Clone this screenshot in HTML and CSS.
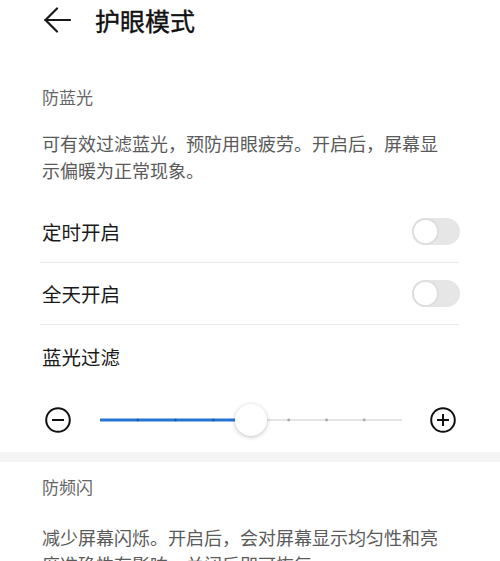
FILE: index.html
```html
<!DOCTYPE html>
<html lang="zh-CN">
<head>
<meta charset="utf-8">
<title>护眼模式</title>
<link rel="stylesheet" href="styles.css">
</head>
<body>
<div class="header">
  <svg class="back" width="28" height="26" viewBox="0 0 28 26"><path d="M27 13H2M14 1.5L2.5 13L14 24.5" fill="none" stroke="#1a1a1a" stroke-width="2.2" stroke-linecap="round" stroke-linejoin="round"/></svg>
  <div class="title">护眼模式</div>
</div>
<section class="card first">
  <div class="sec-title">防蓝光</div>
  <p class="desc">可有效过滤蓝光，预防用眼疲劳。开启后，屏幕显示偏暖为正常现象。</p>
  <div class="rows">
    <div class="row line"><span class="label">定时开启</span><span class="toggle"><span class="knob"></span></span></div>
    <div class="row line"><span class="label">全天开启</span><span class="toggle"><span class="knob"></span></span></div>
    <div class="row"><span class="label">蓝光过滤</span></div>
  </div>
  <div class="slider-row">
    <svg class="icon" width="26" height="26" viewBox="0 0 26 26"><circle cx="13" cy="13" r="11.8" fill="none" stroke="#111" stroke-width="2"/><path d="M7 13H19" stroke="#111" stroke-width="2"/></svg>
    <div class="track">
      <svg width="302" height="34" viewBox="0 0 302 34">
        <line x1="151" y1="17" x2="302" y2="17" stroke="#dcdcdc" stroke-width="1.5"/>
        <line x1="0" y1="17" x2="151" y2="17" stroke="#2474d4" stroke-width="3"/>
        <circle cx="37.75" cy="17" r="1.2" fill="#1a55a0"/>
        <circle cx="75.5" cy="17" r="1.2" fill="#1a55a0"/>
        <circle cx="113.25" cy="17" r="1.2" fill="#1a55a0"/>
        <circle cx="188.75" cy="17" r="1.4" fill="#a8a8a8"/>
        <circle cx="226.5" cy="17" r="1.4" fill="#a8a8a8"/>
        <circle cx="264.25" cy="17" r="1.4" fill="#a8a8a8"/>
      </svg>
      <div class="thumb" style="left: 50%"></div>
    </div>
    <svg class="icon plus" width="26" height="26" viewBox="0 0 26 26"><circle cx="13" cy="13" r="11.8" fill="none" stroke="#111" stroke-width="2"/><path d="M7 13H19M13 7V19" stroke="#111" stroke-width="2"/></svg>
  </div>
</section>
<div class="band"></div>
<section class="card second">
  <div class="sec-title">防频闪</div>
  <p class="desc desc2">减少屏幕闪烁。开启后，会对屏幕显示均匀性和亮度准确性有影响，关闭后即可恢复。</p>
</section>
</body>
</html>
```
FILE: styles.css
```css
html, body {
  margin: 0;
  padding: 0;
  background: #ffffff;
}
body {
  width: 500px;
  height: 561px;
  overflow: hidden;
  font-family: "Noto Sans CJK SC", "Noto Sans", sans-serif;
  color: #1a1a1a;
}
.header {
  height: 40px;
  display: flex;
  align-items: center;
  padding-left: 43px;
}
.back {
  display: block;
}
.title {
  margin-left: 24px;
  font-size: 25px;
  line-height: 40px;
  font-weight: 400;
  color: #111111;
  -webkit-text-stroke: 0.4px #111111;
}
.card {
  padding: 0 41px 0 42px;
}
.first {
  padding-top: 45px;
}
.sec-title {
  font-size: 17px;
  line-height: 24px;
  color: #666666;
}
.desc {
  margin: 21px 0 0 0;
  font-size: 18px;
  line-height: 27px;
  color: #5a5a5a;
  width: 410px;
}
.rows {
  margin-top: 17px;
  margin-left: -2px;
}
.row {
  height: 62px;
  display: flex;
  align-items: center;
  justify-content: space-between;
  padding-left: 2px;
  box-sizing: border-box;
}
.row.line {
  border-bottom: 1px solid #ebebeb;
}
.label {
  font-size: 19.5px;
  color: #1a1a1a;
}
.toggle {
  position: relative;
  width: 48px;
  height: 27px;
  border-radius: 14px;
  background: #e6e6e6;
  margin-right: -1px;
}
.knob {
  position: absolute;
  left: 0;
  top: 0;
  width: 23px;
  height: 23px;
  border-radius: 50%;
  background: #ffffff;
  border: 2px solid #dedede;
}
.slider-row {
  height: 65px;
  display: flex;
  align-items: center;
  margin-left: 3px;
  padding-top: 1px;
  box-sizing: border-box;
}
.icon {
  display: block;
  flex: none;
}
.track {
  position: relative;
  width: 302px;
  height: 34px;
  margin-left: 29px;
}
.track svg {
  display: block;
}
.thumb {
  position: absolute;
  top: 1px;
  width: 32px;
  height: 32px;
  margin-left: -16px;
  border-radius: 50%;
  background: #ffffff;
  box-shadow: 0 1px 4px rgba(0, 0, 0, 0.25);
}
.plus {
  margin-left: 28px;
}
.band {
  height: 10px;
  background: #f4f4f4;
}
.second {
  padding-top: 13px;
}
.desc2 {
  margin-top: 25px;
}
```
